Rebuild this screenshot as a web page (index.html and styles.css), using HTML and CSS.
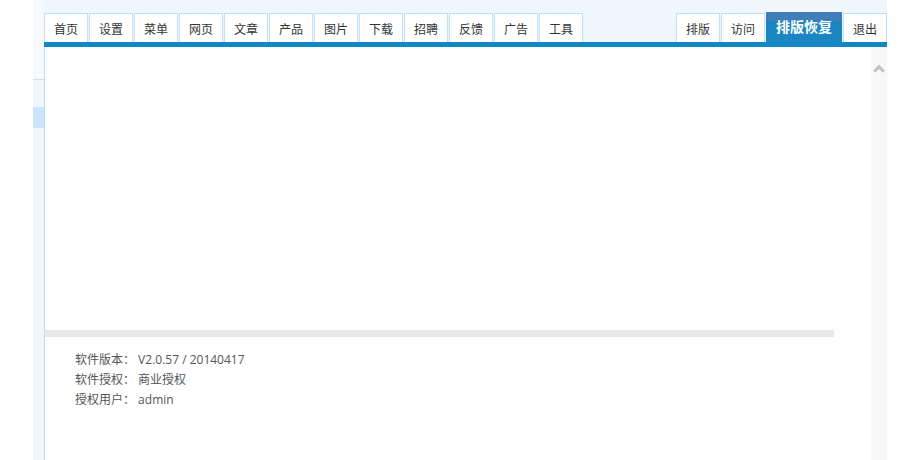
FILE: index.html
```html
<!DOCTYPE html>
<html lang="zh-CN">
<head>
<meta charset="utf-8">
<title>管理后台</title>
<link rel="stylesheet" href="styles.css">
</head>
<body>
<div class="page">
  <div class="gutter"></div>
  <aside class="side">
    <div class="side-top"></div>
    <div class="side-item"></div>
    <div class="side-item active"></div>
    <div class="side-rest"></div>
  </aside>
  <main class="main">
    <header class="header">
      <nav class="tabs">
        <a class="tab">首页</a>
        <a class="tab">设置</a>
        <a class="tab">菜单</a>
        <a class="tab">网页</a>
        <a class="tab">文章</a>
        <a class="tab">产品</a>
        <a class="tab">图片</a>
        <a class="tab">下载</a>
        <a class="tab">招聘</a>
        <a class="tab">反馈</a>
        <a class="tab">广告</a>
        <a class="tab">工具</a>
      </nav>
      <nav class="tabs tabs-right">
        <a class="tab">排版</a>
        <a class="tab">访问</a>
        <a class="tab tab-active">排版恢复</a>
        <a class="tab">退出</a>
      </nav>
    </header>
    <div class="bar"></div>
    <div class="body">
      <section class="content">
        <div class="frame"></div>
        <div class="divider"></div>
        <ul class="info">
          <li>软件版本： V2.0.57 / 20140417</li>
          <li>软件授权： 商业授权</li>
          <li>授权用户： admin</li>
        </ul>
      </section>
      <div class="scroll">
        <svg class="caret" width="12" height="10" viewBox="0 0 12 10"><path d="M1.2 8.6 L6 3.6 L10.8 8.6" fill="none" stroke="#c3c3c3" stroke-width="3"/></svg>
      </div>
    </div>
  </main>
  <div class="right"></div>
</div>
</body>
</html>
```
FILE: styles.css
```css
html, body {
  margin: 0;
  padding: 0;
  height: 100%;
  background: #ffffff;
  font-family: "Open Sans", "Noto Sans CJK SC", sans-serif;
}
.page {
  display: flex;
  height: 460px;
  overflow: hidden;
}
.gutter {
  width: 33px;
  flex: none;
  background: #ffffff;
}
.side {
  width: 11px;
  flex: none;
  display: flex;
  flex-direction: column;
}
.side-top {
  height: 79px;
  background: #f7fafd;
  border-bottom: 1px solid #c8e3f6;
}
.side-item {
  height: 27px;
  background: #eff6fc;
}
.side-item.active {
  height: 21px;
  background: #cce5fc;
}
.side-rest {
  flex: 1;
  background: #eff6fc;
}
.main {
  width: 843px;
  flex: none;
  display: flex;
  flex-direction: column;
}
.right {
  flex: 1;
  background: #ffffff;
}
.header {
  height: 42px;
  background: #f0f7fc;
  display: flex;
  justify-content: space-between;
  align-items: flex-end;
}
.tabs {
  display: flex;
  gap: 1px;
  align-items: flex-end;
}
.tab {
  box-sizing: border-box;
  width: 44px;
  height: 29px;
  background: #ffffff;
  border: 1px solid #bfe0f7;
  border-bottom: none;
  color: #333333;
  font-size: 12px;
  line-height: 31px;
  text-align: center;
  white-space: nowrap;
}
.tab-active {
  width: 76px;
  height: 30px;
  border: none;
  background: linear-gradient(#3f7eb9 0, #3f7eb9 30%, #1c86c1 30%, #1a86c2 100%);
  color: #ffffff;
  font-weight: bold;
  font-size: 14px;
  line-height: 30px;
}
.bar {
  height: 5px;
  background: #1187c4;
}
.body {
  flex: 1;
  display: flex;
}
.content {
  flex: 1;
  border-left: 1px solid #b5dcf7;
  display: flex;
  flex-direction: column;
}
.frame {
  height: 283px;
}
.divider {
  height: 7px;
  margin-right: 37px;
  background: #e8e8e8;
}
.info {
  list-style: none;
  margin: 13px 0 0 0;
  padding: 0 0 0 30px;
  font-size: 12px;
  line-height: 20px;
  color: #555555;
}
.scroll {
  width: 16px;
  flex: none;
  background: #f8f8f8;
  display: flex;
  justify-content: center;
  align-items: flex-start;
}
.caret {
  margin-top: 16px;
}
```
